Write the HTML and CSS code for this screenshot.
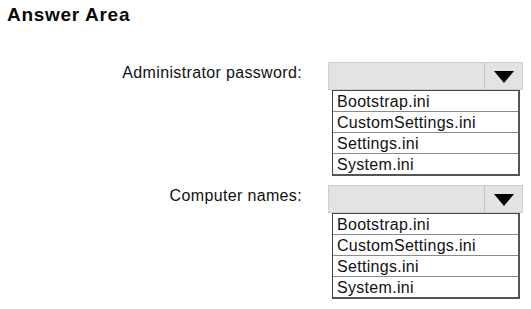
FILE: index.html
```html
<!DOCTYPE html>
<html lang="en">
<head>
    <meta charset="UTF-8">
    <meta name="viewport" content="width=device-width, initial-scale=1.0">
    <title>Answer Area</title>
    <link rel="stylesheet" href="styles.css">
</head>
<body>
    <h1 class="title">Answer Area</h1>
    <div class="answers">
        <div class="field">
            <div class="label">Administrator password:</div>
            <div class="dropdown">
                <div class="select">
                    <span class="value"></span>
                    <span class="arrow"><svg width="20" height="12" viewBox="0 0 20 12"><polygon points="0,0 20,0 10,12" fill="#000"/></svg></span>
                </div>
                <ul class="options">
                    <li>Bootstrap.ini</li>
                    <li>CustomSettings.ini</li>
                    <li>Settings.ini</li>
                    <li>System.ini</li>
                </ul>
            </div>
        </div>
        <div class="field">
            <div class="label">Computer names:</div>
            <div class="dropdown">
                <div class="select">
                    <span class="value"></span>
                    <span class="arrow"><svg width="20" height="12" viewBox="0 0 20 12"><polygon points="0,0 20,0 10,12" fill="#000"/></svg></span>
                </div>
                <ul class="options">
                    <li>Bootstrap.ini</li>
                    <li>CustomSettings.ini</li>
                    <li>Settings.ini</li>
                    <li>System.ini</li>
                </ul>
            </div>
        </div>
    </div>
</body>
</html>
```

FILE: styles.css
```css
body {
    margin: 0;
    background-color: #fff;
    font-family: "Liberation Sans", Arial, sans-serif;
    color: #111;
}
.title {
    margin: 0;
    padding: 3px 0 0 7px;
    font-size: 19px;
    line-height: 23px;
    letter-spacing: 0.7px;
    font-weight: bold;
    color: #0a0a0a;
}
.answers {
    display: flex;
    flex-direction: column;
    gap: 9px;
    padding-top: 36px;
}
.field {
    display: grid;
    grid-template-columns: 302px 195px;
    column-gap: 26px;
}
.label {
    text-align: right;
    font-size: 16px;
    line-height: 22px;
    letter-spacing: 0.35px;
}
.dropdown {
    display: flex;
    flex-direction: column;
}
.select {
    display: flex;
    height: 28px;
    box-sizing: border-box;
    background-color: #e3e3e3;
    border: 1px solid #cfcfcf;
}
.value {
    flex: 1;
}
.arrow {
    width: 37px;
    border-left: 1px solid #c4c4c4;
    display: flex;
    align-items: center;
    justify-content: center;
    padding-top: 1px;
}
.options {
    list-style: none;
    margin: 0 3px 0 4px;
    padding: 0;
    background-color: #fff;
    border: 1px solid #444;
    border-right: 2px solid #555;
    border-bottom: 2px solid #555;
}
.options li {
    height: 18px;
    padding: 2px 0 0 4px;
    font-size: 16px;
    line-height: 18px;
    letter-spacing: 0.3px;
    border-bottom: 1px solid #8a8a8a;
}
.options li:last-child {
    border-bottom: none;
}
```
